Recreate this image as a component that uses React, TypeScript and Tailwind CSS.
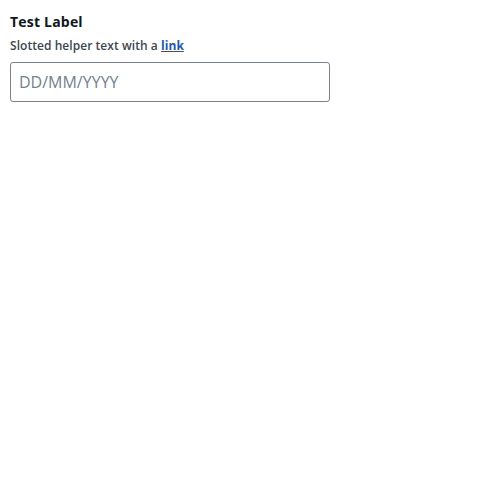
import React from 'react';

export default function App() {
  return (
    <div className="p-[10px] font-['Open_Sans',sans-serif]">
      <label htmlFor="date" className="block text-[14px] font-bold tracking-[0.2px] leading-[20px] text-[#0f1722] mt-[2px]">
        Test Label
      </label>
      <div className="text-[12px] font-semibold tracking-[0.05px] leading-[18px] text-[#404751] mt-[5px]">
        Slotted helper text with a{' '}
        <a href="#" className="font-bold text-[#1759bd] underline">link</a>
      </div>
      <input
        id="date"
        type="text"
        placeholder="DD/MM/YYYY"
        className="mt-[7px] block w-[320px] h-[40px] px-[8px] text-[16px] text-[#1b1b1b] placeholder:text-[#75808d] border border-[#7c828b] rounded-[3px] outline-none"
      />
    </div>
  );
}
